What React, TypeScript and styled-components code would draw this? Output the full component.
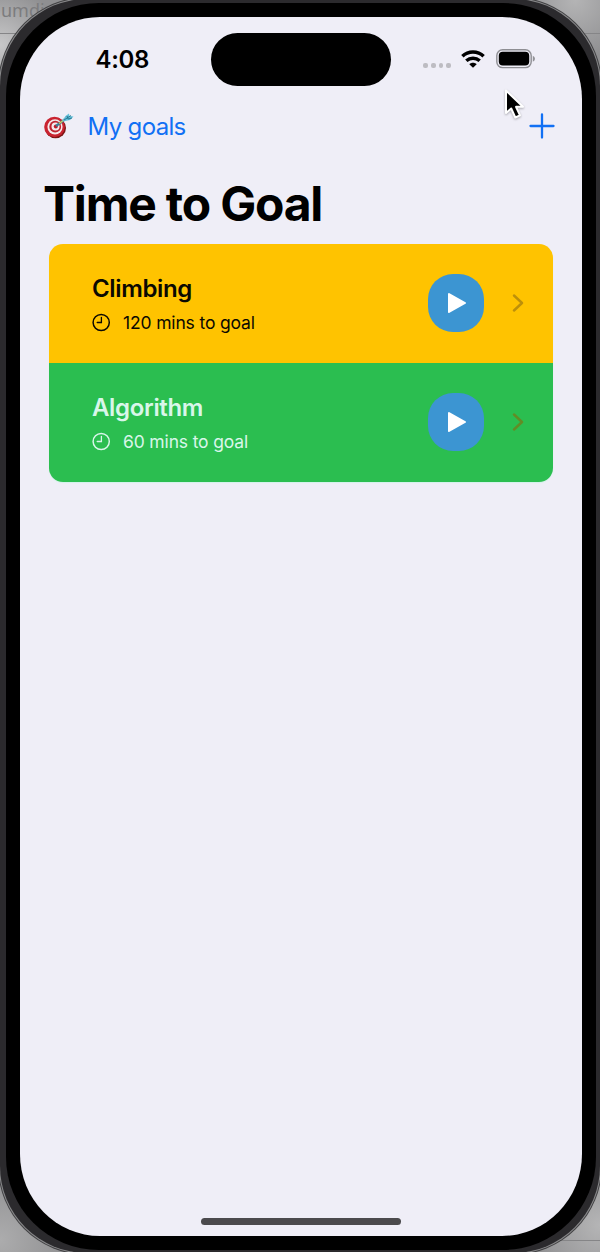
import React from "react";
import styled, { createGlobalStyle } from "styled-components";

const GlobalStyle = createGlobalStyle`
  * { box-sizing: border-box; }
  body { margin: 0; background: #8d8d8f; font-family: Inter, "Liberation Sans", sans-serif; }
  svg { display: block; flex: none; }
  h1, h2, p { margin: 0; }
`;

const Desktop = styled.div`
  position: relative;
  width: 600px;
  height: 1252px;
  overflow: hidden;
  background:
    radial-gradient(circle at 0 45px, #c8c8c9 0, rgba(180, 180, 182, 0) 60px),
    radial-gradient(circle at 575px 0, #b4b4b5 0, rgba(160, 160, 162, 0) 60px),
    radial-gradient(circle at 0 1240px, #acacad 0, rgba(160, 160, 162, 0) 70px),
    radial-gradient(circle at 600px 1225px, #b5b5b6 0, rgba(160, 160, 162, 0) 70px),
    #8f8f91;
`;

const WindowLabel = styled.span`
  position: absolute;
  left: 1px;
  top: -2px;
  font-family: "Noto Sans", sans-serif;
  font-size: 18px;
  line-height: 24px;
  color: #7c7c7e;
`;

const Rule = styled.div<{ $top: number; $right?: boolean }>`
  position: absolute;
  top: ${(p) => p.$top}px;
  ${(p) => (p.$right ? "right: 0;" : "left: 0;")}
  width: 60px;
  height: 1px;
  background: #858587;
`;

const Frame = styled.div`
  position: relative;
  width: 604px;
  height: 1258px;
  margin: -3px -2px;
  padding: 1px;
  border-radius: 89px;
  background: #414143;
`;

const Edge = styled.div`
  height: 100%;
  padding: 1px;
  border-radius: 88px;
  background: #88888a;
`;

const Rail = styled.div`
  height: 100%;
  padding: 4px 4px 3px 6px;
  border-radius: 87px;
  background: #2b2a2d;
`;

const Bezel = styled.div`
  height: 100%;
  padding: 14px;
  border-radius: 93px;
  background: #000;
`;

const Screen = styled.main`
  display: flex;
  flex-direction: column;
  height: 100%;
  border-radius: 80px / 82px;
  background: #efeef7;
  overflow: hidden;
`;

const StatusBar = styled.header`
  display: grid;
  grid-template-columns: 191px 180px 1fr;
  align-items: center;
  height: 54px;
  margin-top: 16px;
`;

const Clock = styled.time`
  padding-left: 75.5px;
  font-size: 24px;
  font-weight: 600;
  line-height: 30px;
  letter-spacing: -0.35px;
`;

const Island = styled.div`
  height: 53px;
  margin-bottom: 1px;
  border-radius: 27px;
  background: #000;
`;

const StatusIcons = styled.div`
  display: flex;
  align-items: center;
  padding: 0 0 2px 32px;
`;

const Signal = styled.div`
  display: flex;
  gap: 3px;
  width: 28px;
  margin: 13px 10px 0 0;
`;

const Dot = styled.i`
  width: 5px;
  height: 5px;
  border-radius: 2px;
  background: #bdbcc2;
`;

const WifiIcon = styled.svg`
  margin-right: 11px;
`;

const NavBar = styled.nav`
  display: flex;
  align-items: center;
  height: 40px;
  margin-top: 19px;
  padding: 0 27px 0 24px;
  color: #1170f4;
`;

const NavLabel = styled.span`
  margin: 1px 0 0 13.5px;
  flex: 1;
  font-size: 24px;
  line-height: 30px;
  letter-spacing: -0.65px;
`;

const Title = styled.h1`
  margin: 28px 0 0 23px;
  font-size: 48px;
  font-weight: 700;
  line-height: 60px;
  letter-spacing: -1.2px;
  white-space: nowrap;
`;

const GoalList = styled.section`
  width: 504.5px;
  margin: 9.5px 0 0 28.5px;
  border-radius: 14px;
  overflow: hidden;
  box-shadow: 0 1px 1px #d2f2ea;
`;

const GoalRow = styled.article<{ $bg: string; $ink: string; $arrow: string }>`
  display: flex;
  align-items: center;
  height: 119.25px;
  padding: 0 29px 0 43.5px;
  background: ${(p) => p.$bg};
  color: ${(p) => p.$ink};
  --arrow: ${(p) => p.$arrow};
`;

const GoalText = styled.div`
  flex: 1;
  padding-top: 1px;
`;

const GoalName = styled.h2`
  font-size: 24px;
  font-weight: 600;
  line-height: 32px;
  letter-spacing: -0.35px;
`;

const GoalTime = styled.p`
  display: flex;
  align-items: center;
  gap: 12px;
  margin-top: 6px;
  font-size: 17.5px;
  line-height: 24px;
  letter-spacing: -0.15px;
`;

const PlayButton = styled.button`
  display: flex;
  align-items: center;
  justify-content: center;
  width: 56px;
  height: 58px;
  margin-right: 28px;
  padding: 0 0 0 1px;
  border: 0;
  border-radius: 25px;
  background: #3c95d2;
`;

const HomeIndicator = styled.div`
  width: 200px;
  height: 7px;
  margin: auto auto 11px;
  border-radius: 4px;
  background: #4b4a4d;
`;

const Cursor = styled.svg`
  position: absolute;
  left: 502px;
  top: 87px;
  filter: drop-shadow(0 1px 1px rgba(0, 0, 0, 0.3));
`;

const goals = [
  { name: "Climbing", mins: 120, bg: "#ffc300", ink: "#0b0902", arrow: "#bd900a" },
  { name: "Algorithm", mins: 60, bg: "#2bbe50", ink: "#d9f6ea", arrow: "#628c25" },
];

const Target = () => (
  <svg width="30" height="28" viewBox="0 0 30 28">
    <ellipse cx="11.5" cy="16" rx="10.5" ry="10.3" fill="#7d1515" />
    <ellipse cx="10.5" cy="15" rx="10.3" ry="10.2" fill="#c92330" />
    <ellipse cx="11" cy="14.8" rx="7.6" ry="7.6" fill="#f5e9eb" />
    <ellipse cx="11.2" cy="14.7" rx="5.9" ry="5.9" fill="#c02430" />
    <ellipse cx="11.5" cy="14.5" rx="4" ry="4" fill="#f3e9ec" />
    <circle cx="11.8" cy="14.4" r="2" fill="#bd1d29" />
    <path d="M12 14L24 5" stroke="#397f99" strokeWidth="2.2" />
    <path d="M15 11.5L20 8" stroke="#e5c64a" strokeWidth="1.3" />
    <path d="M18 9.5L21.5 4L25 1.5L25.5 4L29.5 4.5L26 8L21 9Z" fill="#63bfd8" />
    <path d="M20 8L27 3.5M23 4L24 7L28 6" fill="none" stroke="#24748d" strokeWidth=".9" />
  </svg>
);

const ClockIcon = () => (
  <svg width="19" height="19" viewBox="0 0 19 19" fill="none" stroke="currentColor" strokeWidth="1.5" strokeLinecap="round">
    <circle cx="9.2" cy="9.5" r="8.1" />
    <path d="M9.4 4.3V9.5H5.2" strokeWidth="1.3" />
  </svg>
);

export default function App() {
  return (
    <>
      <GlobalStyle />
      <Desktop>
        <WindowLabel>umdi</WindowLabel>
        <Rule $top={33} />
        <Rule $top={33} $right />
        <Rule $top={1240} $right />
        <Frame>
          <Edge>
            <Rail>
              <Bezel>
                <Screen>
                  <StatusBar>
                    <Clock>4:08</Clock>
                    <Island />
                    <StatusIcons>
                      <Signal><Dot /><Dot /><Dot /><Dot /></Signal>
                      <WifiIcon width="24" height="18" viewBox="0 0 24 18" fill="none" stroke="#000" strokeWidth="3.5">
                        <path d="M1.4 6.3C7.2 .7 16.8 .7 22.6 6.3" />
                        <path d="M5.3 10.8C9.2 7.3 14.8 7.3 18.7 10.8" />
                        <path d="M12 17.7L8.3 14.2C10.2 12.2 13.8 12.2 15.7 14.2Z" fill="#000" stroke="none" />
                      </WifiIcon>
                      <svg width="40" height="20" viewBox="0 0 40 20">
                        <rect x=".8" y=".8" width="34.4" height="17.8" rx="5.8" fill="none" stroke="#8e8e93" strokeWidth="1.4" />
                        <rect x="2.8" y="2.8" width="30.4" height="13.6" rx="4" fill="#000" />
                        <path d="M36.8 6.7Q39 7.5 39 9.7Q39 11.8 36.8 12.7Z" fill="#929297" />
                      </svg>
                    </StatusIcons>
                  </StatusBar>
                  <NavBar>
                    <Target />
                    <NavLabel>My goals</NavLabel>
                    <svg width="26" height="26" viewBox="0 0 26 26" fill="none" stroke="currentColor" strokeWidth="2.3" strokeLinecap="round">
                      <path d="M13 1.5V24.5M1.5 13H24.5" />
                    </svg>
                  </NavBar>
                  <Title>Time to Goal</Title>
                  <GoalList>
                    {goals.map((g) => (
                      <GoalRow key={g.name} $bg={g.bg} $ink={g.ink} $arrow={g.arrow}>
                        <GoalText>
                          <GoalName>{g.name}</GoalName>
                          <GoalTime><ClockIcon />{g.mins} mins to goal</GoalTime>
                        </GoalText>
                        <PlayButton aria-label={`Start ${g.name}`}>
                          <svg width="20" height="22" viewBox="0 0 20 22">
                            <path d="M2 2L18 11L2 20Z" fill="#fff" stroke="#fff" strokeWidth="2" strokeLinejoin="round" />
                          </svg>
                        </PlayButton>
                        <svg width="12" height="18" viewBox="0 0 12 18" fill="none" stroke="var(--arrow)" strokeWidth="2.4" strokeLinecap="round" strokeLinejoin="round">
                          <path d="M2 1.5L10 9L2 16.5" />
                        </svg>
                      </GoalRow>
                    ))}
                  </GoalList>
                  <HomeIndicator />
                </Screen>
              </Bezel>
            </Rail>
          </Edge>
        </Frame>
        <Cursor width="24" height="34" viewBox="0 0 24 34">
          <path d="M4 3.5V26L9.2 21.5L13.3 30.5L18 28.4L14 19.8H21Z" fill="#000" stroke="#fff" strokeWidth="2" strokeLinejoin="round" />
        </Cursor>
      </Desktop>
    </>
  );
}
